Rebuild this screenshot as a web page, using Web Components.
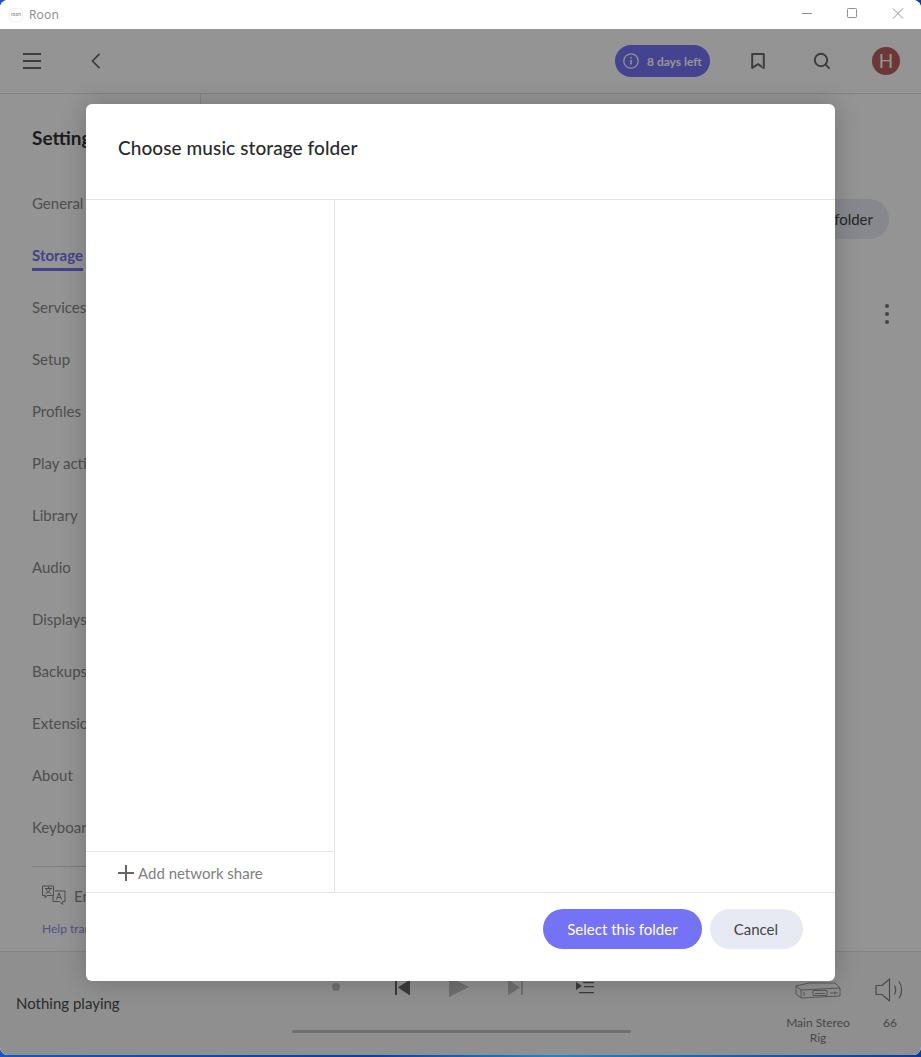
<!DOCTYPE html>
<html>
<head>
<meta charset="utf-8">
<title>Roon</title>
<style>
  html, body { margin: 0; height: 100%; overflow: hidden; }
  body {
    background: linear-gradient(90deg, #1557c0, #0b3ea8 40%, #1f86c9 60%, #0c3a9e);
    font-family: Lato, "Liberation Sans", sans-serif;
  }
</style>
</head>
<body>
<app-window>
  <title-bar slot="title"></title-bar>
  <top-bar slot="top"></top-bar>
  <settings-sidebar slot="side">
    <nav-item>General</nav-item>
    <nav-item active>Storage</nav-item>
    <nav-item>Services</nav-item>
    <nav-item>Setup</nav-item>
    <nav-item>Profiles</nav-item>
    <nav-item>Play actions</nav-item>
    <nav-item>Library</nav-item>
    <nav-item>Audio</nav-item>
    <nav-item>Displays</nav-item>
    <nav-item>Backups</nav-item>
    <nav-item>Extensions</nav-item>
    <nav-item>About</nav-item>
    <nav-item>Keyboard shortcuts</nav-item>
  </settings-sidebar>
  <storage-page slot="main"></storage-page>
  <now-playing slot="footer"></now-playing>
  <folder-dialog slot="dialog"></folder-dialog>
</app-window>

<script>
class AppWindow extends HTMLElement {
  constructor() {
    super();
    this.attachShadow({ mode: 'open' });
    this.shadowRoot.innerHTML = `
      <style>
        :host {
          display: flex;
          flex-direction: column;
          height: 1055px;
          border-radius: 8px;
          overflow: hidden;
          background: #fff;
        }
        .app {
          position: relative;
          flex: 1;
          display: flex;
          flex-direction: column;
          min-height: 0;
        }
        .middle { flex: 1; display: flex; min-height: 0; }
        .scrim {
          position: absolute;
          left: 0; right: 0; top: 0; height: 1027px;
          background: rgba(0, 0, 0, .42);
          display: flex;
          align-items: center;
          justify-content: center;
        }
      </style>
      <slot name="title"></slot>
      <div class="app">
        <slot name="top"></slot>
        <div class="middle">
          <slot name="side"></slot>
          <slot name="main"></slot>
        </div>
        <slot name="footer"></slot>
        <div class="scrim"><slot name="dialog"></slot></div>
      </div>
    `;
  }
}

class TitleBar extends HTMLElement {
  constructor() {
    super();
    this.attachShadow({ mode: 'open' });
    this.shadowRoot.innerHTML = `
      <style>
        :host {
          display: flex;
          align-items: center;
          height: 29px;
          flex: none;
          padding: 0 0 0 10px;
          background: #fff;
          font: 12px "Open Sans", sans-serif;
          color: #8a8a8a;
        }
        .logo {
          width: 12px; height: 12px;
          margin-right: 7px;
          border-radius: 3px;
          box-shadow: 0 0 2px rgba(0,0,0,.18);
          font: 5px/11px Lato, sans-serif;
          color: #777;
          text-align: center;
          overflow: hidden;
        }
        .name { flex: 1; margin-top: -1px; letter-spacing: .2px; }
        svg { display: block; width: 12px; height: 12px; fill: none; stroke: #8f8f8f; stroke-width: 1; margin: -1px 33px 0 0; }
        svg.max { margin-right: 34px; }
        svg:last-child { margin-right: 17px; }
      </style>
      <div class="logo">roon</div>
      <div class="name">Roon</div>
      <svg viewBox="0 0 12 12"><path d="M1 5.500h10"/></svg>
      <svg class="max" viewBox="0 0 12 12"><rect x="1.500" y=".5" width="9" height="9" rx="1"/></svg>
      <svg viewBox="0 0 12 12"><path d="M1 .5l10 10M11 .5l-10 10"/></svg>
    `;
  }
}

class TopBar extends HTMLElement {
  constructor() {
    super();
    this.attachShadow({ mode: 'open' });
    this.shadowRoot.innerHTML = `
      <style>
        :host {
          display: flex;
          align-items: center;
          flex: none;
          height: 64px;
          padding: 0 21px 0 23px;
          border-bottom: 1px solid #e2e2e2;
          box-sizing: content-box;
          background: #fff;
        }
        svg { display: block; fill: none; stroke: #6a6a6a; stroke-width: 2; }
        .menu { width: 18px; height: 18px; margin-right: 50px; }
        .back { width: 10px; height: 16px; flex: none; }
        .space { flex: 1; }
        .trial {
          display: flex;
          align-items: center;
          gap: 8px;
          height: 32px;
          width: 95px;
          box-sizing: border-box;
          padding-left: 8px;
          border-radius: 16px;
          background: #7674f6;
          color: #fff;
          font: 700 12px Lato, sans-serif;
          white-space: nowrap;
        }
        .trial svg { width: 16px; height: 16px; stroke: #fff; stroke-width: 1.3; }
        .mark { width: 14px; height: 16px; margin-left: 41px; }
        .find { width: 18px; height: 18px; margin-left: 48px; }
        .avatar {
          width: 28px; height: 28px;
          margin-left: 41px;
          border-radius: 50%;
          background: #bd5f5f;
          color: #fff;
          font: 19px/28px Lato, sans-serif;
          text-align: center;
        }
      </style>
      <svg class="menu" viewBox="0 0 18 18"><path d="M0 2h18M0 9h18M0 16h18"/></svg>
      <svg class="back" viewBox="0 0 10 16"><path d="M8.500 .8L1.500 8l7 7.200" stroke-width="1.700"/></svg>
      <div class="space"></div>
      <div class="trial">
        <svg viewBox="0 0 16 16"><circle cx="8" cy="8" r="7.200"/><path d="M8 7v4.600M8 4v1.600" stroke-width="1.600"/></svg>
        8 days left
      </div>
      <svg class="mark" viewBox="0 0 14 16"><path d="M1.200 1h11.600v14L7 11.200 1.200 15z" stroke-linejoin="round"/></svg>
      <svg class="find" viewBox="0 0 18 18"><circle cx="8" cy="8" r="6.200"/><path d="M12.600 12.600L16.600 16.600"/></svg>
      <div class="avatar">H</div>
    `;
  }
}

class NavItem extends HTMLElement {
  constructor() {
    super();
    this.attachShadow({ mode: 'open' });
    this.shadowRoot.innerHTML = `
      <style>
        :host {
          display: block;
          height: 52px;
          font: 15px/20px Lato, sans-serif;
          color: #888;
          white-space: nowrap;
        }
        :host([active]) { color: #7573f0; font-weight: 700; }
        span { display: inline-block; padding-bottom: 3px; }
        :host([active]) span { border-bottom: 3px solid #7573f0; }
      </style>
      <span><slot></slot></span>
    `;
  }
}

class SettingsSidebar extends HTMLElement {
  constructor() {
    super();
    this.attachShadow({ mode: 'open' });
    this.shadowRoot.innerHTML = `
      <style>
        :host {
          display: flex;
          flex-direction: column;
          flex: none;
          width: 200px;
          box-sizing: content-box;
          border-right: 1px solid #e2e2e2;
          background: #fff;
          overflow: hidden;
        }
        .inner { padding: 30px 0 0 32px; }
        h1 { margin: 0 0 42px; font: 700 19px/27px Lato, sans-serif; color: #333; }
        .rule { height: 1px; margin-top: -3px; background: #d9d9d9; }
        .lang {
          display: flex;
          align-items: center;
          gap: 8px;
          margin-top: 18px;
          padding-left: 10px;
          font: 15px/20px Lato, sans-serif;
          color: #8a8a8a;
        }
        .lang svg { width: 25px; height: 21px; fill: none; stroke: #808080; stroke-width: 1; flex: none; margin-left: -1px; }
        .help {
          display: block;
          margin-top: 15px;
          padding-left: 10px;
          font: 12px/16px Lato, sans-serif;
          color: #8d8bea;
          white-space: nowrap;
        }
      </style>
      <div class="inner">
        <h1>Settings</h1>
        <slot></slot>
        <div class="rule"></div>
        <div class="lang">
          <svg viewBox="0 0 25 21">
            <path d="M1.500 1h11v9.500H6L4 13l.2-2.500H1.500z"/>
            <path d="M14 6h10v10.500h-2.500l.2 3-3-3H12V11"/>
            <path d="M4 3.500h7M7.500 2v1.500M9.500 3.500c-.7 2.500-2.700 4.300-5 5M5 3.500c.7 2.500 2.700 4.300 5 5"/>
            <path d="M15.500 14.500l2.500-6.500 2.500 6.500M16.300 12.500h3.400"/>
          </svg>
          English
        </div>
        <a class="help">Help translate Roon</a>
      </div>
    `;
  }
}

class StoragePage extends HTMLElement {
  constructor() {
    super();
    this.attachShadow({ mode: 'open' });
    this.shadowRoot.innerHTML = `
      <style>
        :host {
          display: block;
          flex: 1;
          background: #fff;
          padding: 105px 32px 0 0;
        }
        .bar { display: flex; justify-content: flex-end; }
        .add {
          height: 40px;
          padding: 0 16px 0 24px;
          border-radius: 20px;
          background: #e7eaf3;
          color: #444;
          font: 15px/41px Lato, sans-serif;
        }
        .kebab { display: flex; flex-direction: column; gap: 4px; align-items: flex-end; margin: 65px 0 0; }
        .kebab i { display: block; width: 4px; height: 4px; border-radius: 50%; background: #777; }
      </style>
      <div class="bar"><div class="add">Add folder</div></div>
      <div class="kebab"><i></i><i></i><i></i></div>
    `;
  }
}

class NowPlaying extends HTMLElement {
  constructor() {
    super();
    this.attachShadow({ mode: 'open' });
    this.shadowRoot.innerHTML = `
      <style>
        :host {
          display: grid;
          grid-template-columns: 292px 339px 1fr;
          flex: none;
          height: 103px;
          box-sizing: content-box;
          border-top: 1px solid #e2e2e2;
          background: #f6f7f8;
          color: #7c7c7c;
          font: 12px/15px Lato, sans-serif;
        }
        .track { padding: 41px 0 0 16px; font: 15px/20px Lato, sans-serif; color: #4c4c4c; white-space: nowrap; }
        .center { display: flex; flex-direction: column; }
        .transport { display: flex; align-items: center; height: 20px; margin-top: 25px; }
        .transport svg { display: block; flex: none; }
        .dot { width: 8px; height: 8px; border-radius: 50%; background: #c0c0c0; margin: 0 0 0 40px; }
        .progress { height: 3px; margin-top: 33px; background: #c0c0c0; border-radius: 2px; }
        .right { display: flex; justify-content: flex-end; padding-right: 16px; }
        .zone { width: 70px; display: flex; flex-direction: column; align-items: center; text-align: center; }
        .zone svg, .vol svg { display: block; fill: none; stroke: #8a8a8a; stroke-width: .9; }
        .zone svg { width: 46px; height: 17px; margin: 30px 0 16px; }
        .vol { width: 30px; margin-left: 22px; display: flex; flex-direction: column; align-items: center; }
        .vol svg { width: 30px; height: 24px; margin: 26px 0 13px; stroke: #808080; stroke-width: 1.200; }
      </style>
      <div class="track">Nothing playing</div>
      <div class="center">
        <div class="transport">
          <div class="dot"></div>
          <svg style="margin-left:55px" width="15" height="17" viewBox="0 0 15 17"><path d="M0 1h2v15H0zM15 .5v16L3 8.500z" fill="#666"/></svg>
          <svg style="margin-left:39px" width="20" height="20" viewBox="0 0 20 20"><path d="M0 0l20 10L0 20z" fill="#c0c0c0"/></svg>
          <svg style="margin-left:39px" width="15" height="17" viewBox="0 0 15 17"><path d="M13 1h2v15h-2zM0 .5v16l12-8z" fill="#c0c0c0"/></svg>
          <svg style="margin-left:53px" width="18" height="13" viewBox="0 0 18 13"><path d="M0 1l6 4-6 4zM7 1h11v1.200H7zM8 5h10v1.200H8zM3 11h15v1.200H3z" fill="#666"/></svg>
        </div>
        <div class="progress"></div>
      </div>
      <div class="right">
        <div class="zone">
          <svg viewBox="0 0 46 17">
            <path d="M1 4L14 1h26l5 5L6 8zM1 4v8l5 4V8M45 6v8L6 16"/>
            <path d="M18 8.500h14v5H18zM20 11.500h10"/>
            <path d="M35 11h8M40 9.500v3M9 10v4"/>
          </svg>
          Main Stereo Rig
        </div>
        <div class="vol">
          <svg viewBox="0 0 30 24">
            <path d="M1 7.500h6L14.500 1v22L7 16.500H1z" stroke-linejoin="round"/>
            <path d="M19.500 7.500c1.500 3 1.500 6 0 9M24 3.500c3.500 5 3.500 12 0 17"/>
          </svg>
          66
        </div>
      </div>
    `;
  }
}

class PillButton extends HTMLElement {
  constructor() {
    super();
    this.attachShadow({ mode: 'open' });
    this.shadowRoot.innerHTML = `
      <style>
        :host {
          display: block;
          height: 40px;
          padding: 0 25px 0 24px;
          border-radius: 20px;
          background: #e7eaf3;
          color: #444;
          font: 15px/40px Lato, sans-serif;
          white-space: nowrap;
        }
        :host([primary]) { padding: 0 24px; background: #7573f5; color: #fff; }
      </style>
      <slot></slot>
    `;
  }
}

class FolderDialog extends HTMLElement {
  constructor() {
    super();
    this.attachShadow({ mode: 'open' });
    this.shadowRoot.innerHTML = `
      <style>
        :host {
          display: flex;
          flex-direction: column;
          width: 749px;
          height: 877px;
          border-radius: 6px;
          background: #fff;
          box-shadow: 0 0 26px rgba(0, 0, 0, .22);
          overflow: hidden;
        }
        header {
          height: 96px;
          flex: none;
          box-sizing: border-box;
          padding: 30px 32px 0;
          border-bottom: 1px solid #e3e3e3;
          font: 500 19px/27px Lato, sans-serif;
          letter-spacing: .08px;
          color: #2a2a2a;
        }
        .panes { flex: 1; display: flex; min-height: 0; }
        .left {
          width: 249px;
          flex: none;
          display: flex;
          flex-direction: column;
          justify-content: flex-end;
          box-sizing: border-box;
          border-right: 1px solid #e3e3e3;
        }
        .share {
          display: flex;
          align-items: center;
          gap: 4px;
          height: 41px;
          box-sizing: border-box;
          padding: 2px 0 0 32px;
          border-top: 1px solid #e3e3e3;
          font: 15px/20px Lato, sans-serif;
          color: #808080;
        }
        .share svg { width: 16px; height: 16px; stroke: #666; stroke-width: 2; fill: none; flex: none; }
        footer {
          display: flex;
          justify-content: flex-end;
          gap: 8px;
          height: 89px;
          flex: none;
          box-sizing: border-box;
          padding: 16px 32px 0;
          border-top: 1px solid #e3e3e3;
        }
      </style>
      <header>Choose music storage folder</header>
      <div class="panes">
        <div class="left">
          <div class="share">
            <svg viewBox="0 0 16 16"><path d="M8 0v16M0 8h16"/></svg>
            Add network share
          </div>
        </div>
      </div>
      <footer>
        <pill-button primary>Select this folder</pill-button>
        <pill-button>Cancel</pill-button>
      </footer>
    `;
  }
}

customElements.define('app-window', AppWindow);
customElements.define('title-bar', TitleBar);
customElements.define('top-bar', TopBar);
customElements.define('nav-item', NavItem);
customElements.define('settings-sidebar', SettingsSidebar);
customElements.define('storage-page', StoragePage);
customElements.define('now-playing', NowPlaying);
customElements.define('pill-button', PillButton);
customElements.define('folder-dialog', FolderDialog);
</script>
</body>
</html>
